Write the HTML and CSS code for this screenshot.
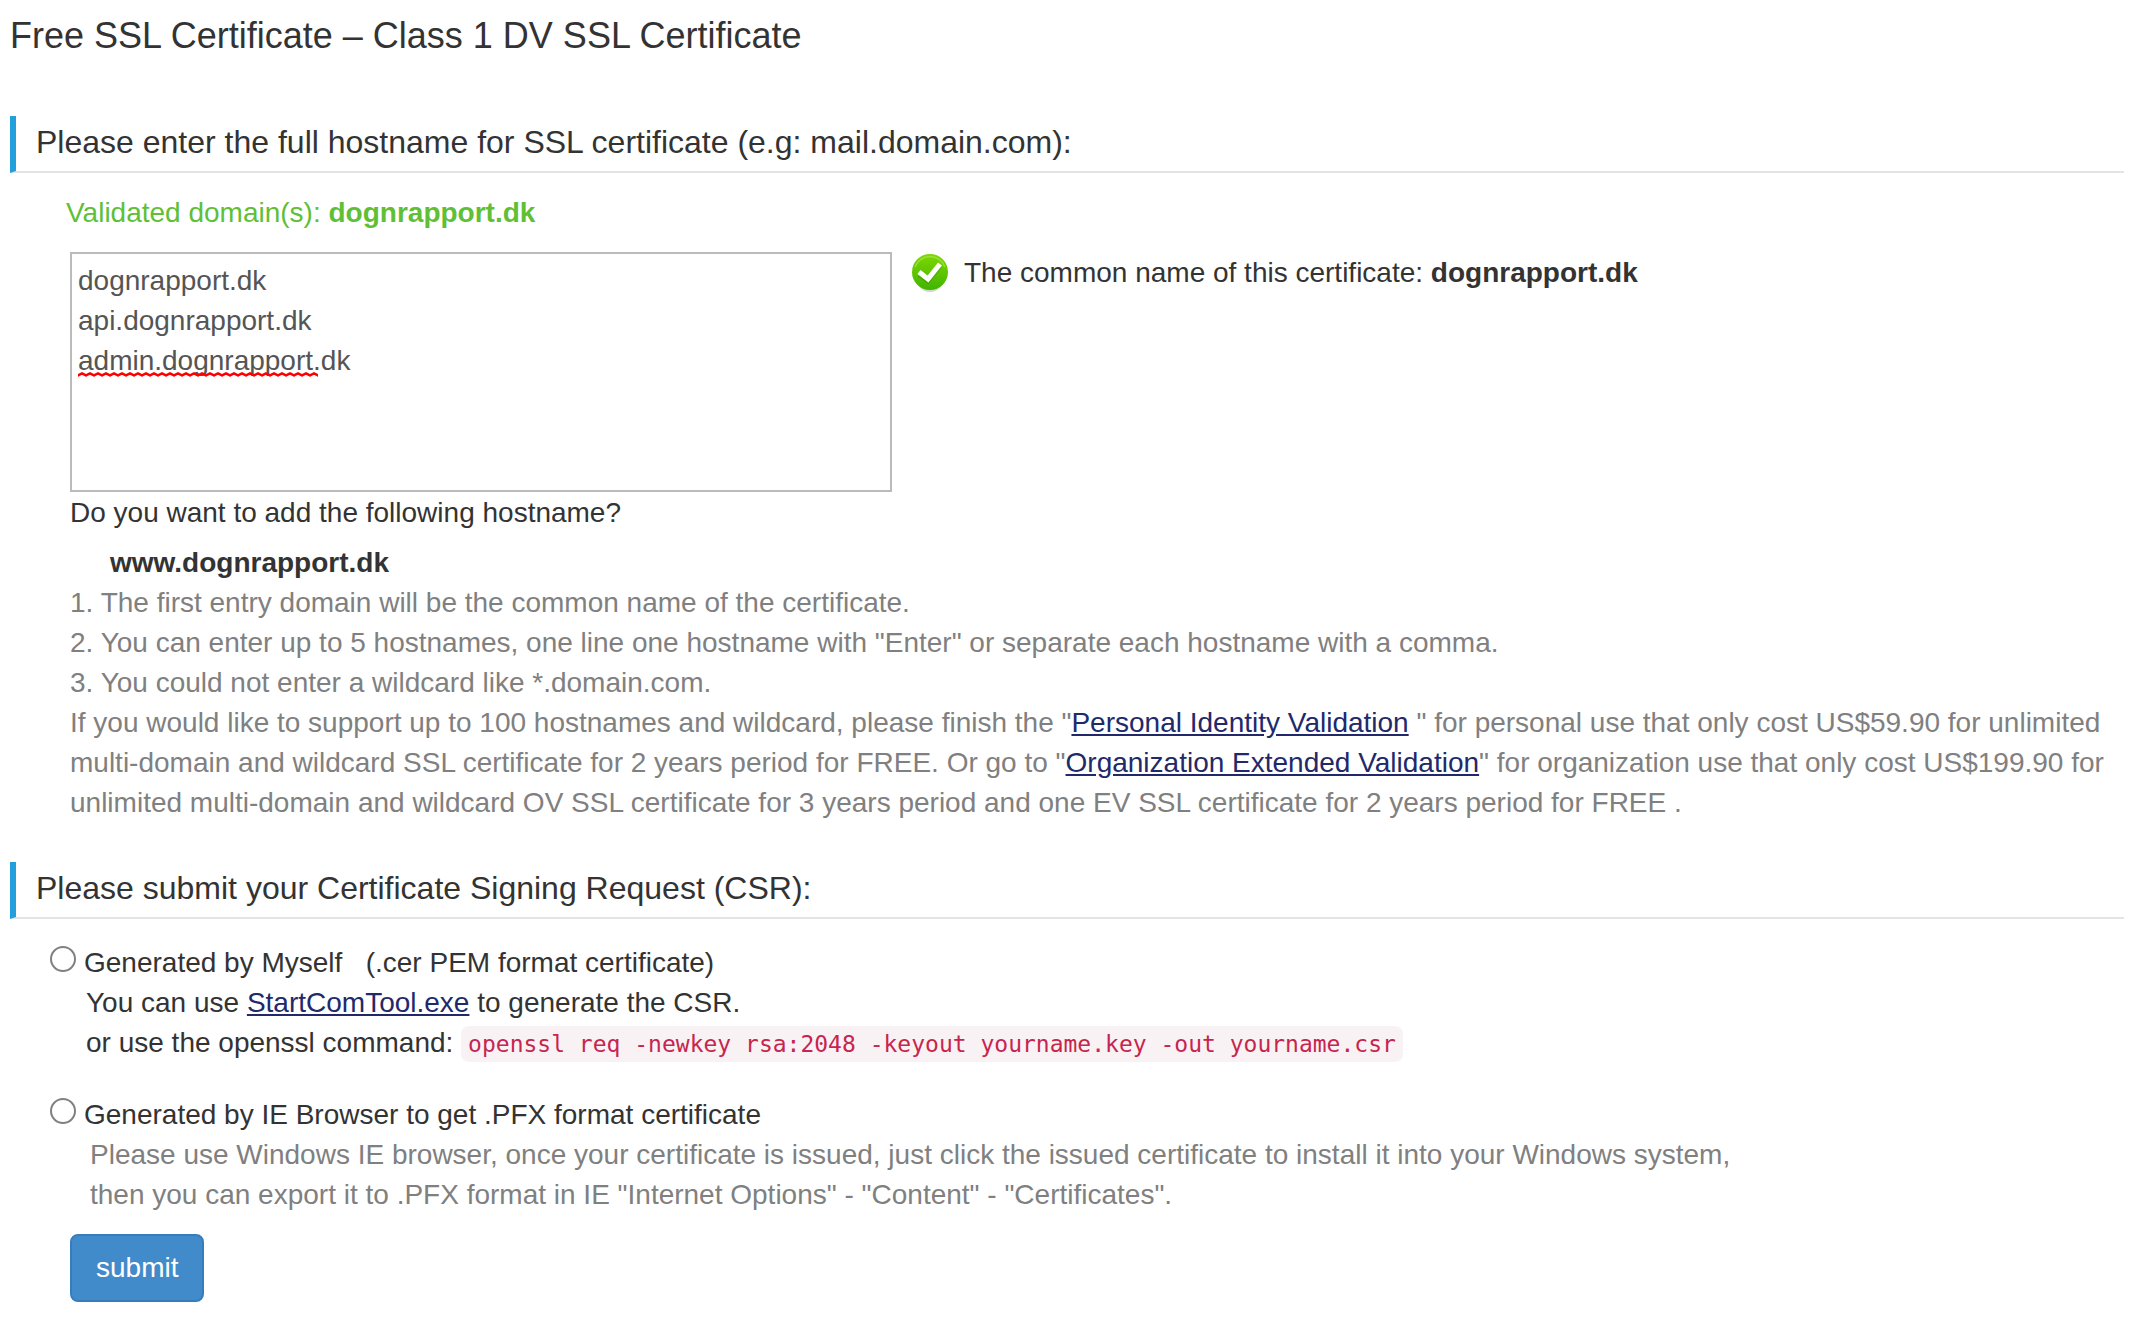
FILE: index.html
```
<!DOCTYPE html>
<html lang="en">
<head>
<meta charset="utf-8">
<title>Free SSL Certificate</title>
<link rel="stylesheet" href="styles.css">
</head>
<body>
<main class="page">
<h1 class="title">Free SSL Certificate – Class 1 DV SSL Certificate</h1>
<form class="form">
<section>
<h2 class="heading"><label for="hostnames">Please enter the full hostname for SSL certificate (e.g: mail.domain.com):</label></h2>
<p class="validated">Validated domain(s): <b>dognrapport.dk</b></p>
<div class="body">
<div class="entry">
<div class="field">
<textarea class="hostnames" id="hostnames" spellcheck="false">dognrapport.dk
api.dognrapport.dk
admin.dognrapport.dk</textarea>
<svg class="squiggle" width="240" height="5" aria-hidden="true"><defs><pattern id="wave" width="8" height="5" patternUnits="userSpaceOnUse"><path d="M-2 4.500L0 3.500L4 1.500L8 3.500L10 4.500" fill="none" stroke="#f00" stroke-width="2.500"/></pattern></defs><rect width="240" height="5" fill="url(#wave)"/></svg>
</div>
<p class="common">
<svg class="check" viewBox="0 0 36 38" aria-hidden="true"><defs><linearGradient id="green" x1="0" y1="0" x2="0" y2="1"><stop offset="0" stop-color="#7ed800"/><stop offset="1" stop-color="#41b400"/></linearGradient></defs><ellipse cx="18" cy="21" rx="15" ry="17" fill="#9ab58a" opacity=".5"/><circle cx="18" cy="18" r="18" fill="url(#green)"/><path d="M3 13A16 16 0 0 1 33 13" fill="none" stroke="#a5e55a" stroke-width="1.500" opacity=".7"/><path d="M7 21L16 27L28 12" fill="none" stroke="#3c9a00" stroke-width="5" opacity=".5"/><path d="M7 18L16 25L28 10" fill="none" stroke="#fff" stroke-width="5"/></svg>
<span>The common name of this certificate: <b>dognrapport.dk</b></span>
</p>
</div>
<p class="question">Do you want to add the following hostname?</p>
<p class="suggestion"><b>www.dognrapport.dk</b></p>
<div class="notes">
<p>1. The first entry domain will be the common name of the certificate.</p>
<p>2. You can enter up to 5 hostnames, one line one hostname with "Enter" or separate each hostname with a comma.</p>
<p>3. You could not enter a wildcard like *.domain.com.</p>
<p>If you would like to support up to 100 hostnames and wildcard, please finish the "<a href="#personal">Personal Identity Validation</a> " for personal use that only cost US$59.90 for unlimited multi-domain and wildcard SSL certificate for 2 years period for FREE. Or go to "<a href="#organization">Organization Extended Validation</a>" for organization use that only cost US$199.90 for unlimited multi-domain and wildcard OV SSL certificate for 3 years period and one EV SSL certificate for 2 years period for FREE .</p>
</div>
</div>
</section>
<section class="csr">
<h2 class="heading">Please submit your Certificate Signing Request (CSR):</h2>
<div class="options">
<div class="option">
<input class="radio" type="radio" name="csr" id="myself">
<div>
<label for="myself">Generated by Myself &nbsp; (.cer PEM format certificate)</label>
<div class="detail">
<p>You can use <a href="#tool">StartComTool.exe</a> to generate the CSR.</p>
<p>or use the openssl command: <code class="command">openssl req -newkey rsa:2048 -keyout yourname.key -out yourname.csr</code></p>
</div>
</div>
</div>
<div class="option">
<input class="radio" type="radio" name="csr" id="browser">
<div>
<label for="browser">Generated by IE Browser to get .PFX format certificate</label>
<div class="detail hint">
<p>Please use Windows IE browser, once your certificate is issued, just click the issued certificate to install it into your Windows system,</p>
<p>then you can export it to .PFX format in IE "Internet Options" - "Content" - "Certificates".</p>
</div>
</div>
</div>
</div>
<button class="submit" type="submit">submit</button>
</section>
</form>
</main>
</body>
</html>
```
FILE: styles.css
```
* {
  box-sizing: border-box;
}

body {
  margin: 0;
  background: #fff;
  color: #333;
  font: 28px/40px "Liberation Sans", Arial, sans-serif;
}

h1,
h2,
p {
  margin: 0;
  font-weight: 400;
}

a {
  color: #22296b;
}

.page {
  padding: 16px 8px 20px 10px;
}

.title {
  margin-bottom: 60px;
  font-size: 36px;
  line-height: 40px;
}

.heading {
  padding: 8px 0 11px 20px;
  border-left: 6px solid #239fdb;
  border-bottom: 2px solid #e4e4e4;
  font-size: 32px;
  line-height: 36px;
}

.validated {
  padding: 20px 0 19px 56px;
  color: #5fbf36;
}

.body {
  padding-left: 60px;
}

.entry {
  display: flex;
  align-items: flex-start;
  gap: 20px;
  margin-bottom: 1px;
}

.field {
  position: relative;
  flex: 0 1 822px;
}

.hostnames {
  display: block;
  width: 100%;
  height: 240px;
  padding: 7px 6px;
  border: 2px solid #bbb;
  border-radius: 0;
  outline: 0;
  resize: none;
  background: #fff;
  color: #555;
  font: inherit;
}

.squiggle {
  position: absolute;
  left: 8px;
  top: 120px;
}

.common {
  display: flex;
  align-items: center;
  gap: 16px;
  padding-top: 1px;
}

.check {
  flex: none;
  width: 36px;
  height: 38px;
}

.suggestion {
  padding: 10px 0 0 40px;
}

.notes,
.hint {
  color: #808080;
}

.csr {
  margin-top: 39px;
}

.options {
  display: grid;
  gap: 32px;
  padding: 24px 0 19px 40px;
}

.option {
  display: flex;
  align-items: flex-start;
  gap: 8px;
}

.radio {
  appearance: none;
  flex: none;
  width: 26px;
  height: 26px;
  margin: 3px 0 0;
  border: 2px solid #808080;
  border-radius: 50%;
  background: #fff;
}

.radio:checked {
  background: radial-gradient(circle, #333 6px, #fff 7px);
}

.detail {
  padding-left: 2px;
}

.hint {
  padding-left: 6px;
}

.command {
  padding: 5px 7px;
  border-radius: 8px;
  background: #f9f2f4;
  color: #c7254e;
  font: 23px/30px Consolas, "DejaVu Sans Mono", monospace;
}

.submit {
  display: block;
  margin-left: 60px;
  padding: 12px 24px;
  border: 2px solid #357ebd;
  border-radius: 8px;
  background: #428bca;
  color: #fff;
  font: inherit;
}
```
